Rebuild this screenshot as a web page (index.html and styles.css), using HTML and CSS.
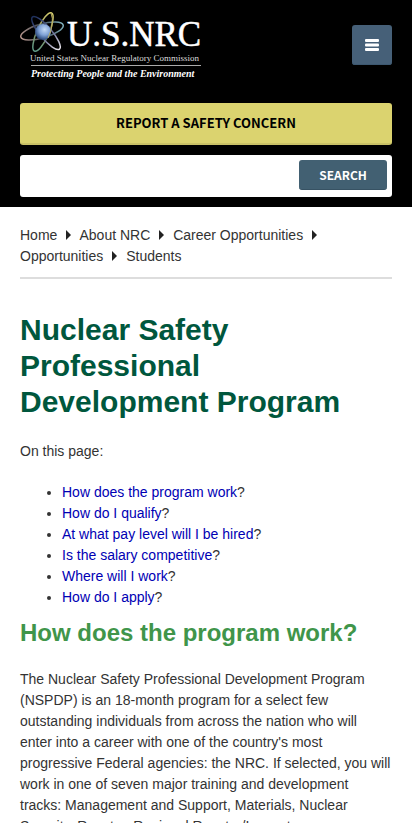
FILE: index.html
```html
<!DOCTYPE html>
<html lang="en">
<head>
<meta charset="utf-8">
<meta name="viewport" content="width=device-width, initial-scale=1">
<title>Nuclear Safety Professional Development Program</title>
<link rel="stylesheet" href="styles.css">
</head>
<body>
<header class="site-header">
  <div class="brand-row">
    <a class="logo" href="#" aria-label="U.S. NRC home">
      <svg width="190" height="72" viewBox="0 0 190 72">
        <defs>
          <radialGradient id="core" cx="60%" cy="35%" r="70%">
            <stop offset="0" stop-color="#c5daf5"/>
            <stop offset="0.5" stop-color="#7fa2d6"/>
            <stop offset="1" stop-color="#1b3768"/>
          </radialGradient>
          <linearGradient id="orbit-a" x1="0" y1="0" x2="1" y2="0">
            <stop offset="0" stop-color="#b5958c"/>
            <stop offset="0.5" stop-color="#3c464f"/>
            <stop offset="1" stop-color="#7fb0bc"/>
          </linearGradient>
          <linearGradient id="orbit-b" x1="0" y1="0" x2="0" y2="1">
            <stop offset="0" stop-color="#d8cf6e"/>
            <stop offset="0.5" stop-color="#8a8f60"/>
            <stop offset="1" stop-color="#5f9d8a"/>
          </linearGradient>
          <linearGradient id="orbit-c" x1="0" y1="0" x2="1" y2="0">
            <stop offset="0" stop-color="#1d2f5c"/>
            <stop offset="0.6" stop-color="#6b6f98"/>
            <stop offset="1" stop-color="#e8e4ea"/>
          </linearGradient>
        </defs>
        <g fill="none" stroke-width="1.5">
          <ellipse cx="22" cy="21" rx="22" ry="7" transform="rotate(-16 22 21)" stroke="url(#orbit-a)"/>
          <ellipse cx="23" cy="22" rx="6" ry="21" transform="rotate(24 23 22)" stroke="url(#orbit-b)"/>
          <ellipse cx="26" cy="23" rx="21" ry="6" transform="rotate(50 26 23)" stroke="url(#orbit-c)"/>
        </g>
        <circle cx="23" cy="22" r="8" fill="url(#core)"/>
        <path d="M31 3Q35 13 28 28" fill="none" stroke="#b9ae62" stroke-width="1"/>
        <text class="logo-name" x="47" y="36">U.S.NRC</text>
        <text class="logo-agency" x="10" y="51">United States Nuclear Regulatory Commission</text>
        <path d="M11 55.500H181" stroke="#aaa"/>
        <text class="logo-motto" x="11" y="67">Protecting People and the Environment</text>
      </svg>
    </a>
    <button class="menu" type="button" aria-label="Menu">
      <svg width="14" height="12" viewBox="0 0 14 12" fill="#fff">
        <rect width="14" height="3" rx="1"/><rect y="4.500" width="14" height="3" rx="1"/><rect y="9" width="14" height="3" rx="1"/>
      </svg>
    </button>
  </div>
  <a class="report" href="#">REPORT A SAFETY CONCERN</a>
  <form class="search">
    <input class="search-field" type="text" aria-label="Search">
    <button class="search-button" type="button">SEARCH</button>
  </form>
</header>
<main class="content">
  <nav class="crumbs" aria-label="Breadcrumb">
    <a href="#">Home</a><svg class="arrow" viewBox="0 0 5 10"><path d="M0 0L5 5L0 10Z"/></svg>
    <a href="#">About NRC</a><svg class="arrow" viewBox="0 0 5 10"><path d="M0 0L5 5L0 10Z"/></svg>
    <a href="#">Career Opportunities</a><svg class="arrow" viewBox="0 0 5 10"><path d="M0 0L5 5L0 10Z"/></svg>
    <a href="#">Opportunities</a><svg class="arrow" viewBox="0 0 5 10"><path d="M0 0L5 5L0 10Z"/></svg>
    <a href="#">Students</a>
  </nav>
  <h1>Nuclear Safety Professional Development Program</h1>
  <p>On this page:</p>
  <ul class="toc">
    <li><a href="#work">How does the program work</a>?</li>
    <li><a href="#qualify">How do I qualify</a>?</li>
    <li><a href="#pay">At what pay level will I be hired</a>?</li>
    <li><a href="#salary">Is the salary competitive</a>?</li>
    <li><a href="#where">Where will I work</a>?</li>
    <li><a href="#apply">How do I apply</a>?</li>
  </ul>
  <h2 id="work">How does the program work?</h2>
  <p>The Nuclear Safety Professional Development Program (NSPDP) is an 18-month program for a select few outstanding individuals from across the nation who will enter into a career with one of the country's most progressive Federal agencies: the NRC. If selected, you will work in one of seven major training and development tracks: Management and Support, Materials, Nuclear Security, Reactor, Regional Reactor/Inspector,</p>
</main>
</body>
</html>
```
FILE: styles.css
```css
* { box-sizing: border-box; }
body {
  margin: 0;
  background: #fff;
  color: #333;
  font: 14px/21px "Liberation Sans", Arial, sans-serif;
}
a { text-decoration: none; }
.site-header {
  display: flex;
  flex-direction: column;
  gap: 10px;
  padding: 10px 20px;
  background: #000;
}
.brand-row {
  display: flex;
  justify-content: space-between;
  align-items: flex-start;
  height: 83px;
}
.logo svg { display: block; }
.logo text { fill: #fff; font-family: "Liberation Serif", "Times New Roman", serif; }
.logo .logo-name { font-size: 35px; stroke: #fff; stroke-width: 0.5px; }
.logo .logo-agency { font-size: 9px; fill: #ddd; }
.logo .logo-motto { font-size: 10px; font-style: italic; font-weight: bold; }
.menu, .report, .search-button {
  border: 0;
  border-radius: 3px;
  font-family: "Noto Sans CJK JP", sans-serif;
  font-weight: bold;
  text-align: center;
}
.menu {
  display: grid;
  place-items: center;
  width: 40px;
  height: 40px;
  margin-top: 15px;
  padding: 0;
  background: #466078;
  box-shadow: inset 0 -1px #3d5870;
}
.report {
  padding: 10px;
  background: #dbd36f;
  border-bottom: 2px solid #c9c166;
  color: #000;
  font-size: 13px;
  line-height: 20px;
}
.search {
  display: flex;
  gap: 5px;
  padding: 5px;
  border-radius: 3px;
  background: #fff;
}
.search-field {
  flex: 1;
  min-width: 0;
  height: 32px;
  border: 0;
  background: none;
}
.search-button {
  width: 88px;
  height: 30px;
  background: #426072;
  border-bottom: 1px solid #375263;
  color: #fff;
  font-size: 12px;
}
.content { padding: 18px 20px; }
.crumbs {
  padding-bottom: 10px;
  border-bottom: 2px solid #ddd;
}
.crumbs a { color: #333; }
.arrow {
  width: 5px;
  height: 10px;
  margin: 0 5px 0 9px;
  fill: #222;
}
h1 {
  margin: 33px 0 21px;
  color: #00573d;
  font-size: 30px;
  line-height: 36px;
}
h2 {
  margin: 10px 0 22px;
  color: #40954a;
  font-size: 24px;
  line-height: 29px;
}
p { margin: 0 0 20px; }
.toc { margin: 0; padding-left: 42px; }
.toc a { color: #0000b4; }
```
